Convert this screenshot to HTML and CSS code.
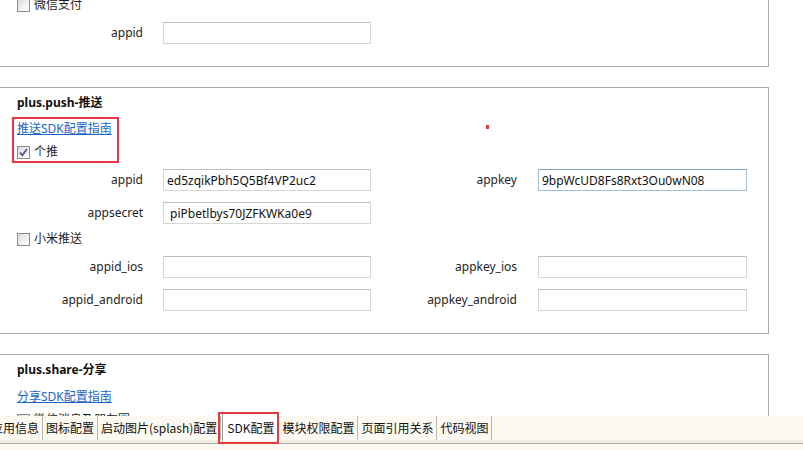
FILE: index.html
```html
<!DOCTYPE html>
<html lang="zh-CN">
<head>
<meta charset="utf-8">
<title>SDK配置</title>
<link rel="stylesheet" href="styles.css">
</head>
<body>
<div class="page">
  <section class="panel panel-first">
    <div class="check-row"><span class="cb"></span><span>微信支付</span></div>
    <div class="form">
      <label class="lbl">appid</label><input class="inp" type="text" value="">
    </div>
  </section>

  <section class="panel panel-push">
    <h3 class="title">plus.push-推送</h3>
    <a class="link" href="#">推送SDK配置指南</a>
    <div class="check-row"><span class="cb checked"><svg viewBox="0 0 13 13" width="13" height="13"><path d="M3 6.5 L5.3 9.3 L10 3" fill="none" stroke="#4b5597" stroke-width="1.8"/></svg></span><span>个推</span></div>
    <div class="form">
      <label class="lbl">appid</label><input class="inp" type="text" value="ed5zqikPbh5Q5Bf4VP2uc2">
      <label class="lbl lbl2">appkey</label><input class="inp inp-focus" type="text" value="9bpWcUD8Fs8Rxt3Ou0wN08">
      <label class="lbl">appsecret</label><input class="inp" type="text" value=" piPbetlbys70JZFKWKa0e9">
    </div>
    <div class="check-row check-gap"><span class="cb"></span><span>小米推送</span></div>
    <div class="form">
      <label class="lbl">appid_ios</label><input class="inp" type="text" value="">
      <label class="lbl lbl2">appkey_ios</label><input class="inp" type="text" value="">
      <label class="lbl">appid_android</label><input class="inp" type="text" value="">
      <label class="lbl lbl2">appkey_android</label><input class="inp" type="text" value="">
    </div>
    <div class="annot-box"></div>
    <div class="red-dot"></div>
  </section>

  <section class="panel panel-share">
    <h3 class="title">plus.share-分享</h3>
    <a class="link" href="#">分享SDK配置指南</a>
    <div class="check-row"><span class="cb"></span><span>微信消息及朋友圈</span></div>
  </section>
</div>

<div class="tabbar">
  <div class="tabs">
    <span class="tab">应用信息</span>
    <span class="tab">图标配置</span>
    <span class="tab">启动图片(splash)配置</span>
    <span class="tab active">SDK配置</span>
    <span class="tab">模块权限配置</span>
    <span class="tab">页面引用关系</span>
    <span class="tab">代码视图</span>
  </div>
  <div class="tab-foot"></div>
  <div class="annot-tab"></div>
</div>
</body>
</html>
```

FILE: styles.css
```css
html, body {
  margin: 0;
  padding: 0;
  background: #ffffff;
  overflow: hidden;
  width: 803px;
  height: 450px;
}

body {
  position: relative;
  font-family: "Noto Sans", "Noto Sans CJK SC", sans-serif;
  font-size: 12px;
  color: #1e1e1e;
}

.page {
  margin-top: -15px;
  display: flex;
  flex-direction: column;
  gap: 20px;
}

.panel {
  position: relative;
  box-sizing: border-box;
  width: 770px;
  margin-left: -1px;
  border: 1px solid #a9a9a9;
  padding: 6px 0 22px 17px;
  display: flex;
  flex-direction: column;
  align-items: flex-start;
}

.panel-first {
  padding-top: 10px;
}

.title {
  margin: 0;
  font-size: 12px;
  font-weight: bold;
  line-height: 18px;
  color: #111;
}

.link {
  margin-top: 8px;
  line-height: 18px;
  color: #1a64c8;
  text-decoration: underline;
}

.panel-share .link {
  margin-top: 9px;
}

.check-row {
  display: flex;
  align-items: center;
  gap: 4px;
  height: 18px;
  line-height: 18px;
  margin-top: 5px;
}

.panel-first .check-row {
  margin-top: 0;
}

.check-gap {
  margin-top: 6px;
}

.cb {
  box-sizing: border-box;
  width: 13px;
  height: 13px;
  border: 1px solid #8d8d8d;
  background: linear-gradient(135deg, #dcdcdc 0%, #f2f2f2 60%, #ffffff 100%);
  position: relative;
  display: inline-block;
}

.cb svg {
  position: absolute;
  left: -1px;
  top: -1px;
}

.form {
  display: grid;
  grid-template-columns: 146px 208px 167px 209px;
  grid-auto-rows: 22px;
  row-gap: 11px;
  margin-top: 8px;
  margin-left: -17px;
  padding-left: 17px;
}

.form .lbl {
  grid-column: 1;
  text-align: right;
  padding-right: 20px;
  line-height: 22px;
  color: #1e1e1e;
}

.form .lbl2 {
  grid-column: 3;
  padding-right: 21px;
}

.inp {
  box-sizing: border-box;
  width: 100%;
  height: 22px;
  margin: 0;
  border: 1px solid #d6d6d6;
  border-top-color: #bdbdbd;
  padding: 0 3px;
  font-family: "Noto Sans", "Noto Sans CJK SC", sans-serif;
  font-size: 12px;
  color: #111;
  background: #fff;
  outline: none;
}

.inp-focus {
  border-color: #9fbfd6;
  border-top-color: #7ea6c4;
}

.annot-box {
  position: absolute;
  left: 12px;
  top: 29px;
  width: 107px;
  height: 46px;
  box-sizing: border-box;
  border: 2px solid #e5393f;
}

.red-dot {
  position: absolute;
  left: 486px;
  top: 37px;
  width: 3px;
  height: 4px;
  background: #d93a4c;
}

.tabbar {
  position: absolute;
  left: 0;
  top: 416px;
  width: 803px;
  height: 34px;
  background: #fbf9f2;
}

.tabs {
  display: flex;
  height: 24px;
  margin-left: -12px;
  font-family: "Noto Sans CJK SC", "Noto Sans", sans-serif;
}

.tab {
  padding: 0 3px;
  height: 24px;
  line-height: 24px;
  border-right: 1px solid #b8b6ae;
  color: #111;
  white-space: nowrap;
}

.tab.active {
  background: #ffffff;
  border-left: 1px solid #9e9e9e;
  border-right: 1px solid #9e9e9e;
  padding: 0 4px;
  margin-top: -3px;
  height: 28px;
  line-height: 30px;
  margin-left: 1px;
}

.tab-foot {
  height: 3px;
  background: #f1eee3;
  border-bottom: 1px solid #a8a8a8;
}

.annot-tab {
  position: absolute;
  left: 218px;
  top: -4px;
  width: 61px;
  height: 32px;
  box-sizing: border-box;
  border: 2px solid #e5393f;
}
```
